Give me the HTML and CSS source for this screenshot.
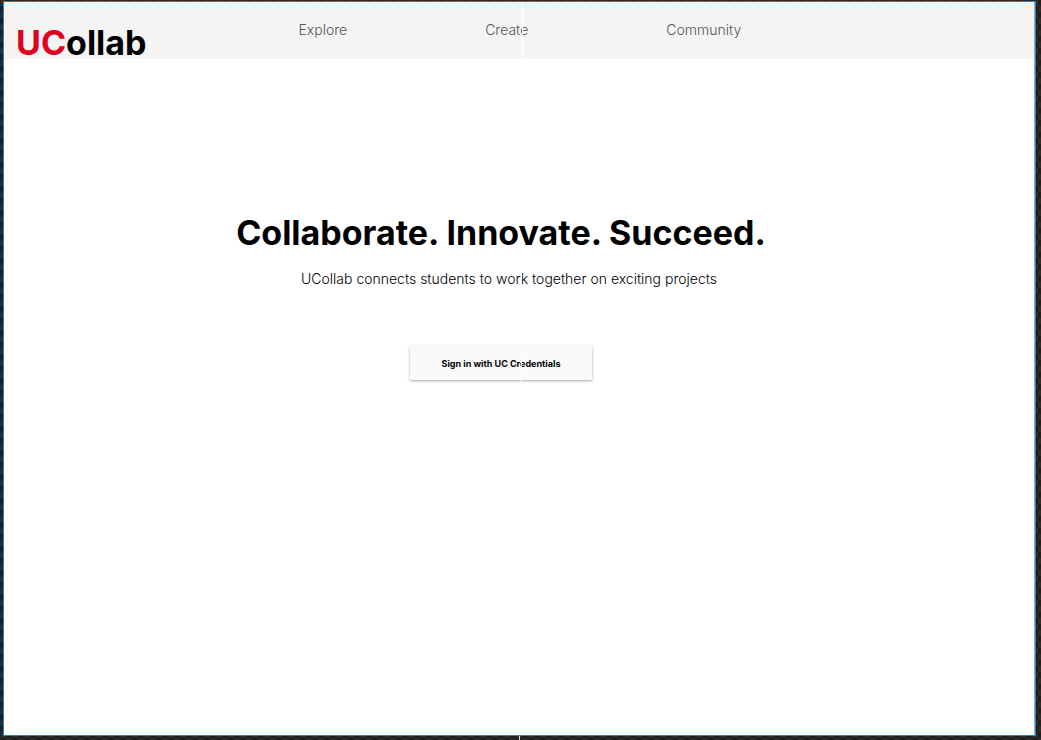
FILE: index.html
```html
<!DOCTYPE html>
<html lang="en">
<head>
<meta charset="utf-8">
<title>UCollab</title>
<link rel="stylesheet" href="styles.css">
</head>
<body>
<div class="frame">
  <header class="header">
    <a class="logo" href="#"><span class="logo-accent">UC</span>ollab</a>
    <nav class="nav">
      <a class="nav-link" href="#">Explore</a>
      <a class="nav-link" href="#">Create</a>
      <a class="nav-link" href="#">Community</a>
    </nav>
  </header>
  <main class="hero">
    <h1 class="title">Collaborate. Innovate. Succeed.</h1>
    <p class="subtitle">UCollab connects students to work together on exciting projects</p>
    <button class="sign-in" type="button">Sign in with UC Credentials</button>
  </main>
</div>
</body>
</html>
```

FILE: styles.css
```css
* {
  box-sizing: border-box;
}

body {
  position: relative;
  display: flex;
  min-height: 100vh;
  margin: 0;
  padding: 1px 5px 4px 3px;
  font-family: Inter, "Liberation Sans", sans-serif;
  color: #000;
  background: repeating-conic-gradient(#1e1e1e 0 25%, #2b2b2b 0 50%) 0 0 / 12px 12px;
}

/* guide tick below the frame */
body::after {
  content: "";
  position: absolute;
  bottom: 0;
  left: calc(50% - 2px);
  width: 1px;
  height: 4px;
  background: #ddd;
}

.frame {
  display: flex;
  flex: 1;
  flex-direction: column;
  border: 1px solid #1684d8;
  box-shadow: inset -1px 0 #aaa;
  background: #fff;
}

.header {
  position: relative;
  display: flex;
  height: 57px;
  margin-right: 1px;
  padding-left: 12px;
  background: #f4f4f4;
}

/* center guide */
.header::after,
.hero::after {
  content: "";
  position: absolute;
  top: 0;
  bottom: 0;
  left: calc(50% + 3px);
  width: 1px;
  background: #fff;
}

.hero::after {
  top: 208px;
  left: calc(50% + 2px);
  opacity: 0.8;
}

.logo {
  padding-top: 19px;
  font-size: 34px;
  font-weight: 700;
  line-height: 44px;
  color: #000;
  text-decoration: none;
}

.logo-accent {
  color: #e00122;
}

.nav {
  display: flex;
  gap: 138px;
  padding: 18px 0 0 152px;
}

.nav-link {
  font-size: 14px;
  font-weight: 300;
  line-height: 20px;
  color: #555;
  text-decoration: none;
}

.hero {
  position: relative;
  display: flex;
  flex: 1;
  flex-direction: column;
  align-items: center;
  margin-right: 1px;
  padding: 152px 36px 0 0;
}

.title {
  margin: 0;
  font-size: 34px;
  font-weight: 700;
  line-height: 44px;
}

.subtitle {
  margin: 14px 0 0 16px;
  font-size: 14px;
  font-weight: 300;
  line-height: 20px;
}

.sign-in {
  width: 182px;
  height: 34px;
  margin-top: 57px;
  padding: 0;
  border: 0;
  border-radius: 1px;
  font-family: inherit;
  font-size: 9px;
  font-weight: 700;
  color: #000;
  background: #fafafa;
  box-shadow: 0 1px 3px rgb(0 0 0 / 35%);
}
```
